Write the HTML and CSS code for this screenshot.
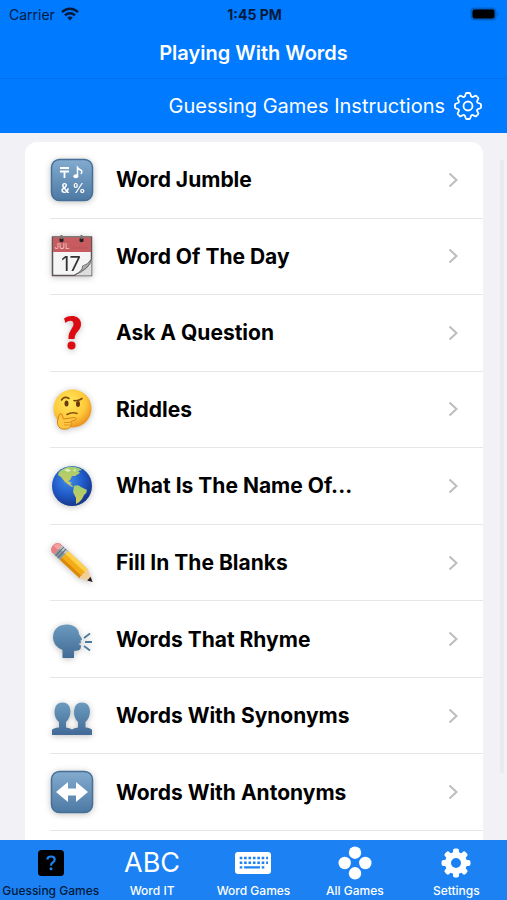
FILE: index.html
```
<!DOCTYPE html>

<html lang="en">
   <head>
      <meta charset="UTF-8">
      <meta name="viewport" content="width=device-width, initial-scale=1">
      <title>Playing With Words</title>
      <link rel="stylesheet" href="styles.css">
   </head>
   <body>
      <!-- gradients and shapes shared by the icons -->
      <svg class="defs" width="0" height="0" aria-hidden="true">
         <defs>
            <linearGradient id="steel" x1="0" y1="0" x2="0" y2="1">
               <stop offset="0" stop-color="#84abcf"/>
               <stop offset="1" stop-color="#4c79a4"/>
            </linearGradient>
            <linearGradient id="shade" x1="0" y1="0" x2="0" y2="1">
               <stop offset="0" stop-color="#6c9bbf"/>
               <stop offset="1" stop-color="#416a96"/>
            </linearGradient>
            <radialGradient id="face" cx=".42" cy=".35" r=".65">
               <stop offset="0" stop-color="#ffe95c"/>
               <stop offset=".65" stop-color="#ffc93a"/>
               <stop offset="1" stop-color="#eb9420"/>
            </radialGradient>
            <radialGradient id="sea" cx=".4" cy=".35" r=".65">
               <stop offset="0" stop-color="#3f8ce8"/>
               <stop offset=".6" stop-color="#2059c8"/>
               <stop offset="1" stop-color="#17398d"/>
            </radialGradient>
            <linearGradient id="land" x1="0" y1="0" x2="0" y2="1">
               <stop offset="0" stop-color="#9dcf72"/>
               <stop offset="1" stop-color="#d5c95a"/>
            </linearGradient>
            <linearGradient id="curl" x1="0" y1="0" x2="1" y2="1">
               <stop offset="0" stop-color="#ffffff"/>
               <stop offset="1" stop-color="#666666"/>
            </linearGradient>
            <path id="tooth" d="M0-13H1.5C3-13 2.1-9.75 3.75-9.05C5.5-8.35 7.07-11.31 8.13-10.26L9.2-9.2"/>
            <rect id="cog" x="-3" y="-14.5" width="6" height="7" rx="2"/>
         </defs>
      </svg>

      <header>
         <div class="status">
            <div class="carrier">
               Carrier
               <svg width="18" height="14" viewBox="0 0 18 14" fill="none" stroke="#001a3d" stroke-width="2.4">
                  <path d="M1 5.2C5.5.6 12.500.6 17 5.2"/>
                  <path d="M4 8.400C6.800 5.600 11.200 5.600 14 8.400"/>
                  <path d="M9 13.500L6.200 10.600C7.800 9.200 10.200 9.200 11.800 10.600Z" fill="#001a3d" stroke="none"/>
               </svg>
            </div>
            <div class="clock">1:45 PM</div>
            <div class="battery">
               <svg width="30" height="14" viewBox="0 0 30 14">
                  <rect x=".5" y=".5" width="26" height="13" rx="4" fill="#0060c9"/>
                  <rect x="2.500" y="2.500" width="22" height="9" rx="2.200" fill="#000"/>
                  <path d="M27.500 5Q29.500 7 27.500 9Z" fill="#0058b8"/>
               </svg>
            </div>
         </div>
         <h1>Playing With Words</h1>
         <div class="toolbar">
            <button type="button" class="instructions">
               Guessing Games Instructions
               <svg width="30" height="30" viewBox="-15 -15 30 30" fill="none" stroke="#fff" stroke-width="1.800">
                  <use href="#tooth"/>
                  <use href="#tooth" transform="rotate(45)"/>
                  <use href="#tooth" transform="rotate(90)"/>
                  <use href="#tooth" transform="rotate(135)"/>
                  <use href="#tooth" transform="rotate(180)"/>
                  <use href="#tooth" transform="rotate(225)"/>
                  <use href="#tooth" transform="rotate(270)"/>
                  <use href="#tooth" transform="rotate(315)"/>
                  <circle r="4.500"/>
               </svg>
            </button>
         </div>
      </header>

      <main>
         <ul class="games">
            <li>
               <a href="#jumble">
                  <svg class="icon" viewBox="0 0 44 44">
                     <rect x="1.500" y="1.500" width="41" height="41" rx="8" fill="url(#steel)" stroke="#456f96" stroke-width="1.500"/>
                     <path d="M10 10H19M10 13.500H19M14.500 13.500V20" fill="none" stroke="#fff" stroke-width="1.800"/>
                     <path d="M27.500 18V9.500Q29 11.500 31.500 12.500Q32.500 14 31 16" fill="none" stroke="#fff" stroke-width="1.500"/>
                     <ellipse cx="25.800" cy="18.300" rx="2.500" ry="2" fill="#fff"/>
                     <text x="15" y="35" class="glyph">&amp;</text>
                     <text x="29" y="35" class="glyph">%</text>
                  </svg>
                  <span>Word Jumble</span>
                  <svg class="chevron" viewBox="0 0 10 16"><path d="M1.500 1.500L8.500 8L1.500 14.500"/></svg>
               </a>
            </li>
            <li>
               <a href="#day">
                  <svg class="icon" viewBox="0 0 44 44">
                     <rect x="2.500" y="3" width="39" height="38.500" fill="#f5f5f5" stroke="#5d5455" stroke-width="1.500"/>
                     <rect x="3" y="3.500" width="38" height="14.500" fill="#c75b60"/>
                     <text x="12" y="15" class="month">JUL</text>
                     <path d="M23 14H38" stroke="#a84d52" stroke-dasharray="1 1"/>
                     <text x="21" y="37" class="date">17</text>
                     <path d="M25 41.500L41.500 24.500V41.500Z" fill="#ddd"/>
                     <path d="M24.500 41Q33 37 32.500 32Q38 31 41.500 25Q40 35 24.500 41Z" fill="url(#curl)" stroke="#555" stroke-width=".8"/>
                     <circle cx="11.500" cy="6" r="2.200" fill="#222"/>
                     <circle cx="31.500" cy="6" r="2.200" fill="#222"/>
                     <path d="M11.500 1V5M31.500 1V5" stroke="#777" stroke-width="2"/>
                  </svg>
                  <span>Word Of The Day</span>
                  <svg class="chevron" viewBox="0 0 10 16"><path d="M1.500 1.500L8.500 8L1.500 14.500"/></svg>
               </a>
            </li>
            <li>
               <a href="#ask">
                  <svg class="icon" viewBox="0 0 44 44">
                     <path d="M14 7.500C20 3 31.500 4.500 31 13.500C30.700 20 25 20.500 24.500 28H18.500C18 20 23.500 17 23.500 13C23.500 9 19 9 15.500 12Z" fill="#dc0a12"/>
                     <circle cx="21.500" cy="34.500" r="4" fill="#dc0a12"/>
                  </svg>
                  <span>Ask A Question</span>
                  <svg class="chevron" viewBox="0 0 10 16"><path d="M1.500 1.500L8.500 8L1.500 14.500"/></svg>
               </a>
            </li>
            <li>
               <a href="#riddles">
                  <svg class="icon" viewBox="0 0 44 44">
                     <circle cx="22.500" cy="21.500" r="19" fill="url(#face)"/>
                     <ellipse cx="16.500" cy="16.500" rx="2" ry="3" fill="#6a3a0b"/>
                     <ellipse cx="28" cy="17" rx="2" ry="3" fill="#6a3a0b"/>
                     <path d="M11.500 13Q14.500 8.500 19 11.500M24 13.500Q28 14.500 32 11.500" fill="none" stroke="#7c4a10" stroke-width="1.600" stroke-linecap="round"/>
                     <path d="M17 27.500Q22 24.500 27 26.500" fill="none" stroke="#8a5212" stroke-width="1.500" stroke-linecap="round"/>
                     <path d="M9.500 27Q12 25.500 12.500 29L13.500 32L24.500 30.500Q27.500 31 25.500 33L20.500 34.500Q22.500 36 20.500 40Q18 43 12.500 42Q7 41 7.500 34Z" fill="#ffc640" stroke="#d7851b" stroke-width="1"/>
                     <path d="M14 35.500H20M14 38H20" stroke="#d7851b" stroke-width=".8"/>
                  </svg>
                  <span>Riddles</span>
                  <svg class="chevron" viewBox="0 0 10 16"><path d="M1.500 1.500L8.500 8L1.500 14.500"/></svg>
               </a>
            </li>
            <li>
               <a href="#name">
                  <svg class="icon" viewBox="0 0 44 44">
                     <circle cx="22" cy="22" r="20" fill="url(#sea)"/>
                     <path d="M9 8Q14 3 21 2.500Q29 3 32 6L28 7L30 9L25 12L22 12L20 16L18 17L22 19L20 20L24 23L21 22.500L15 18L11 13L8 11Z" fill="url(#land)"/>
                     <path d="M14 6L18 4.500L21 6.500L18 8ZM23 6L26 5L25 8Z" fill="#e4edb8"/>
                     <path d="M24 22Q28 20 31 23L37 26Q37 29 34 31L32 35Q29 39 26 40L26 34L23 28Z" fill="url(#land)"/>
                  </svg>
                  <span>What Is The Name Of...</span>
                  <svg class="chevron" viewBox="0 0 10 16"><path d="M1.500 1.500L8.500 8L1.500 14.500"/></svg>
               </a>
            </li>
            <li>
               <a href="#blanks">
                  <svg class="icon" viewBox="0 0 44 44">
                     <g transform="translate(6 7) rotate(43)">
                        <path d="M0-6H3V6H0Q-4 5-4 0Q-4-5 0-6Z" fill="#e77f83"/>
                        <path d="M0-5H3V0H-3Q-3-4 0-5Z" fill="#f6a3a4"/>
                        <path d="M3-6H11V6H3Z" fill="#8b9aa3"/>
                        <path d="M3-5.500H11V-2H3Z" fill="#c1cbd0"/>
                        <path d="M5-6V6M8-6V6" stroke="#5c6870"/>
                        <path d="M11-6H38L40 0L38 6H11Z" fill="#f4ac16"/>
                        <path d="M11-6H38V-2H11Z" fill="#ffd04c"/>
                        <path d="M11 3H38V6H11Z" fill="#d98a0d"/>
                        <path d="M38-6L50 0L38 6Q36 3 38 2Q36 0 38-2Q36-4 38-6Z" fill="#f0cf9c"/>
                        <path d="M45-2.500L50 0L45 2.500Z" fill="#222"/>
                     </g>
                  </svg>
                  <span>Fill In The Blanks</span>
                  <svg class="chevron" viewBox="0 0 10 16"><path d="M1.500 1.500L8.500 8L1.500 14.500"/></svg>
               </a>
            </li>
            <li>
               <a href="#rhyme">
                  <svg class="icon" viewBox="0 0 44 44">
                     <path d="M12.500 41V33Q3 29 3 20.500C3 11 10 7.500 17 7.500C25 7.500 29 13 29 17L32 22Q32 23.500 30.500 23.500L31 26L28.500 27L31 28.500Q31 33 28 33.500L24 34V41Z" fill="url(#shade)"/>
                     <path d="M34 21L40 16.500M35 25H42M34 29L40 33.500" stroke="#4b7b9d" stroke-width="1.800"/>
                  </svg>
                  <span>Words That Rhyme</span>
                  <svg class="chevron" viewBox="0 0 10 16"><path d="M1.500 1.500L8.500 8L1.500 14.500"/></svg>
               </a>
            </li>
            <li>
               <a href="#synonyms">
                  <svg class="icon" viewBox="0 0 44 44">
                     <path d="M2 41V36Q3 34 9 33.500V28Q4 24 4.500 17Q5 8.500 12.500 8.500Q20 8.500 20.500 17Q20.500 24 16 28V33.500Q20 34 22 35.500Q24 34 28 33.500V28Q23.500 24 24 17Q24.500 8.500 32 8.500Q39.500 8.500 40 17Q40 24 35.500 28V33.500Q41 34 42 36V41Z" fill="url(#shade)"/>
                  </svg>
                  <span>Words With Synonyms</span>
                  <svg class="chevron" viewBox="0 0 10 16"><path d="M1.500 1.500L8.500 8L1.500 14.500"/></svg>
               </a>
            </li>
            <li>
               <a href="#antonyms">
                  <svg class="icon" viewBox="0 0 44 44">
                     <rect x="1.500" y="1.500" width="41" height="41" rx="8" fill="url(#steel)" stroke="#456f96" stroke-width="1.500"/>
                     <path d="M6 22L18 12V18.500H26V12L38 22L26 32V25.500H18V32Z" fill="#fff"/>
                  </svg>
                  <span>Words With Antonyms</span>
                  <svg class="chevron" viewBox="0 0 10 16"><path d="M1.500 1.500L8.500 8L1.500 14.500"/></svg>
               </a>
            </li>
         </ul>
         <div class="scrollbar"></div>
      </main>

      <nav>
         <a href="#guessing" class="active">
            <svg width="26" height="26" viewBox="0 0 26 26">
               <rect width="26" height="26" rx="3.500" fill="#000"/>
               <path d="M9.300 9.500Q9.500 6.500 13 6.500Q16.700 6.500 16.700 9.500Q16.700 11.500 14.500 12.700Q13 13.500 13 15.700" fill="none" stroke="#1c82f3" stroke-width="2.200"/>
               <circle cx="13" cy="18.700" r="1.500" fill="#1c82f3"/>
            </svg>
            <span>Guessing Games</span>
         </a>
         <a href="#word-it">
            <b class="abc">ABC</b>
            <span>Word IT</span>
         </a>
         <a href="#word-games">
            <svg width="36" height="24" viewBox="0 0 36 24">
               <rect x="0" y="1" width="36" height="22" rx="3" fill="#fff"/>
               <path d="M4.700 7H33M4.700 11.700H33" stroke="#1c82f3" stroke-width="2.600" stroke-dasharray="2.600 1.800"/>
               <path d="M4.700 16.400H7.300M9.100 16.400H25M26.700 16.400H29.300" stroke="#1c82f3" stroke-width="2.400"/>
            </svg>
            <span>Word Games</span>
         </a>
         <a href="#all">
            <svg width="34" height="34" viewBox="-17 -17 34 34" fill="#fff">
               <circle cy="-10.300" r="6.200"/>
               <circle cy="10.300" r="6.200"/>
               <circle cx="-10.300" r="6.200"/>
               <circle cx="10.300" r="6.200"/>
            </svg>
            <span>All Games</span>
         </a>
         <a href="#settings">
            <svg width="30" height="30" viewBox="-15 -15 30 30" fill="#fff">
               <circle r="8" fill="none" stroke="#fff" stroke-width="6"/>
               <use href="#cog"/>
               <use href="#cog" transform="rotate(45)"/>
               <use href="#cog" transform="rotate(90)"/>
               <use href="#cog" transform="rotate(135)"/>
               <use href="#cog" transform="rotate(180)"/>
               <use href="#cog" transform="rotate(225)"/>
               <use href="#cog" transform="rotate(270)"/>
               <use href="#cog" transform="rotate(315)"/>
            </svg>
            <span>Settings</span>
         </a>
      </nav>
   </body>
</html>
```

FILE: styles.css
```
*{
    box-sizing: border-box;
}

body{
    margin: 0;
    height: 100vh;
    display: flex;
    flex-direction: column;
    background: #f1f1f6;
    font-family: Inter, "Liberation Sans", sans-serif;
}

a{
    color: inherit;
    text-decoration: none;
}

svg{
    display: block;
    flex: none;
}

.defs{
    position: absolute;
}

header{
    background: #007aff;
    color: white;
}

.status{
    display: grid;
    grid-template-columns: 1fr auto 1fr;
    align-items: center;
    height: 28px;
    padding: 0 7px 0 9px;
    font-size: 14px;
    color: #001a3d;
}

.carrier{
    display: flex;
    align-items: center;
    gap: 6px;
}

.clock{
    font-weight: 700;
}

.battery{
    justify-self: end;
}

h1{
    margin: 0;
    height: 51px;
    line-height: 50px;
    font-size: 20px;
    font-weight: 600;
    text-align: center;
    border-bottom: 1px solid #0070ee;
}

.toolbar{
    display: flex;
    justify-content: flex-end;
    height: 54px;
    padding: 0 24px;
}

.instructions{
    display: flex;
    align-items: center;
    gap: 8px;
    padding: 0;
    border: none;
    background: none;
    color: white;
    font-family: inherit;
    font-size: 20px;
}

main{
    flex: 1;
    min-height: 0;
    display: flex;
    position: relative;
    padding: 9px 24px 0 25px;
}

.games{
    flex: 1;
    display: grid;
    grid-auto-rows: 1fr;
    margin: 0;
    padding: 0 0 9px 25px;
    list-style: none;
    background: white;
    border-radius: 12px 12px 0 0;
}

.games li{
    display: flex;
    border-bottom: 1px solid #e6e6e9;
}

.games a{
    flex: 1;
    display: flex;
    align-items: center;
    padding-right: 25px;
    font-size: 21px;
    font-weight: 700;
    color: black;
}

.games span{
    flex: 1;
    padding-left: 22px;
}

.icon{
    width: 44px;
    height: 44px;
    overflow: visible;
    filter: drop-shadow(0 1px 3px rgba(0, 0, 0, 0.25));
}

.glyph{
    font-size: 13px;
    font-weight: 600;
    fill: white;
    text-anchor: middle;
}

.month{
    font-size: 8px;
    font-weight: 400;
    fill: #f3c9c9;
    text-anchor: middle;
}

.date{
    font-size: 20px;
    font-weight: 400;
    fill: #333;
    text-anchor: middle;
}

.chevron{
    width: 10px;
    height: 16px;
    fill: none;
    stroke: #bdbdc0;
    stroke-width: 2;
}

.scrollbar{
    position: absolute;
    top: 27px;
    right: 3px;
    bottom: 67px;
    width: 4px;
    border-radius: 2px;
    background: #e9e9ee;
}

nav{
    display: grid;
    grid-template-columns: repeat(5, 1fr);
    height: 60px;
    background: #1c82f3;
    color: white;
}

nav a{
    display: grid;
    grid-template-rows: 46px 14px;
    justify-items: center;
    align-items: center;
    font-size: 12px;
    font-weight: 500;
    line-height: 14px;
    white-space: nowrap;
}

nav span{
    align-self: end;
    padding-bottom: 2px;
}

nav .active{
    color: #001a3d;
}

.abc{
    font-size: 27px;
    font-weight: 400;
}
```
